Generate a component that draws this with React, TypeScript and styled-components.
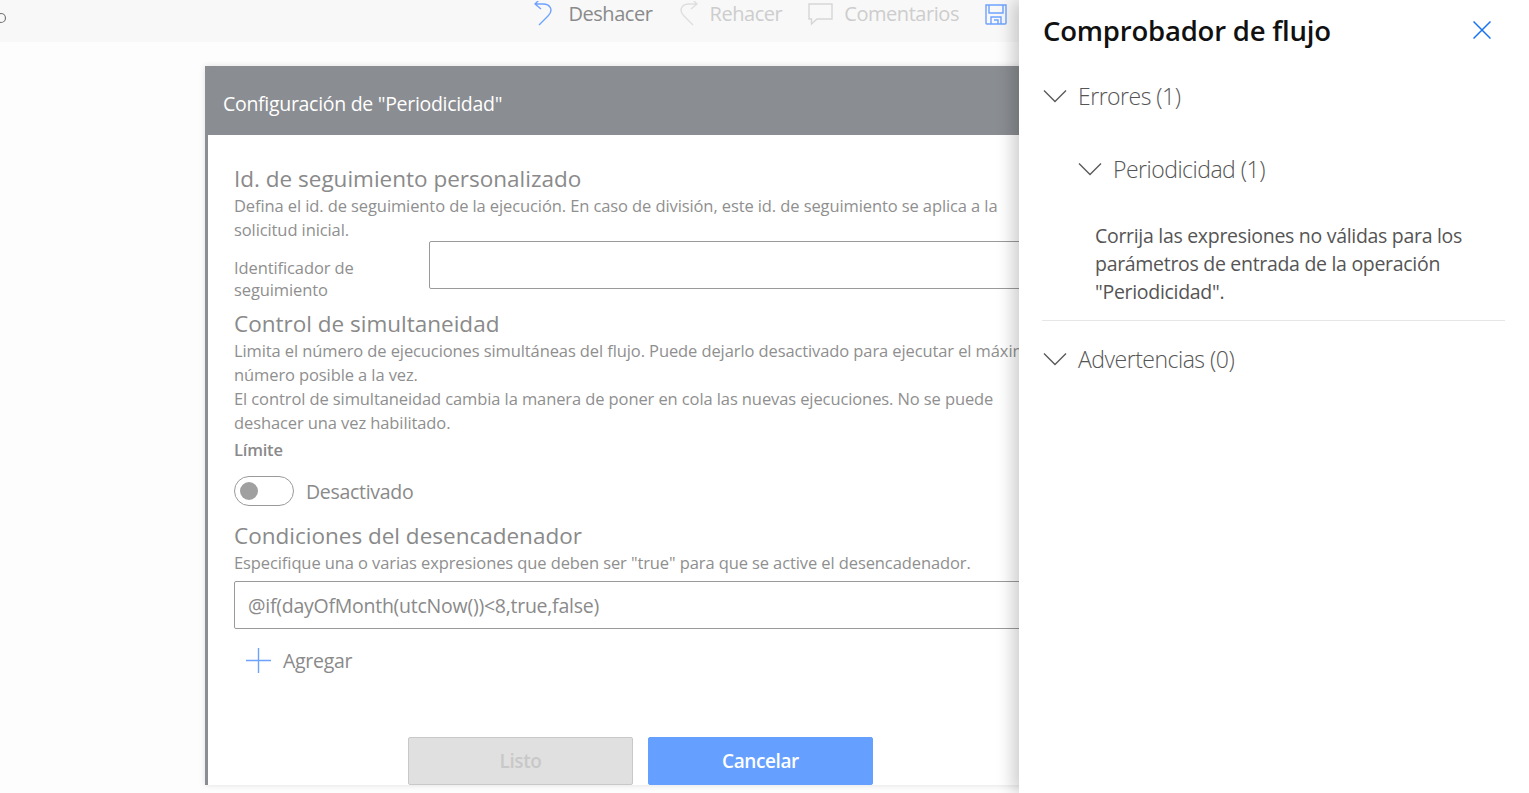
import React from "react";
import styled, { createGlobalStyle } from "styled-components";

const Global = createGlobalStyle`
  html, body { margin: 0; padding: 0; height: 100%; overflow: hidden; background: #fff; }
  #root { height: 100%; }
  * { box-sizing: border-box; }
`;

const font = `"Open Sans", "Noto Sans", "Liberation Sans", sans-serif`;

const Page = styled.div`
  display: flex;
  width: 1529px;
  height: 793px;
  overflow: hidden;
  font-family: ${font};
`;
const Main = styled.main`
  flex: 1;
  min-width: 0;
  overflow: hidden;
  background: #fdfdfd;
`;
const Toolbar = styled.div`
  display: flex;
  align-items: center;
  height: 42px;
  padding: 0 12px 14px 0;
  background: #f8f8f8;
  justify-content: space-between;
`;
const ToolGroup = styled.div`
  display: flex;
  align-items: center;
`;
const ToolLabel = styled.span<{ $off?: boolean }>`
  font-size: 20px;
  letter-spacing: -0.45px;
  line-height: 28px;
  margin-left: ${(p) => (p.$off ? 11 : 14)}px;
  margin-right: 26px;
  color: ${(p) => (p.$off ? "#cdcdcd" : "#8a8a8a")};
  white-space: nowrap;
`;
const Stage = styled.div`
  padding: 24px 0 0 205px;
`;
const Dialog = styled.section`
  width: 980px;
  background: #fff;
  border-left: 3px solid #8a8d91;
  box-shadow: 0 0 6px rgba(0, 0, 0, 0.12);
`;
const DialogHeader = styled.header`
  height: 69px;
  margin-left: -3px;
  padding: 24px 0 0 18px;
  background: #8a8d91;
  color: #fff;
  font-size: 19.5px;
  letter-spacing: -0.3px;
  line-height: 28px;
`;
const DialogBody = styled.div`
  padding: 29px 0 0 26px;
`;
const Heading = styled.h2`
  margin: 0;
  font-size: 22.5px;
  font-weight: 400;
  line-height: 30px;
  color: #8a8a8a;
  letter-spacing: 0;
  white-space: nowrap;
`;
const SpacedHeading = styled(Heading)`
  margin-top: 15px;
`;
const Description = styled.p`
  margin: 0;
  font-size: 16.5px;
  line-height: 24px;
  color: #8f8f8f;
  white-space: nowrap;
  letter-spacing: -0.1px;
`;
const FieldRow = styled.div`
  display: flex;
  height: 60px;
  margin-top: -1px;
  margin-bottom: 8px;
`;
const FieldLabel = styled.label`
  width: 195px;
  padding-top: 16px;
  font-size: 16.5px;
  letter-spacing: -0.1px;
  line-height: 22px;
  color: #8f8f8f;
`;
const TextBox = styled.div<{ $wide?: boolean }>`
  width: ${(p) => (p.$wide ? 900 : 700)}px;
  height: 48px;
  padding-left: 13px;
  border: 1px solid #9a9a9a;
  border-radius: 2px;
  background: #fff;
  font-size: 19.5px;
  letter-spacing: -0.25px;
  line-height: 48px;
  color: #8a8a8a;
`;
const LimitLabel = styled.div`
  margin-top: 4px;
  font-size: 16.5px;
  font-weight: 600;
  letter-spacing: -0.2px;
  line-height: 22px;
  color: #8a8a8a;
`;
const ToggleRow = styled.div`
  display: flex;
  align-items: center;
  height: 30px;
  margin-top: 15px;
`;
const Toggle = styled.div`
  display: flex;
  align-items: center;
  width: 60px;
  height: 30px;
  padding-left: 5px;
  border: 1px solid #9a9a9a;
  border-radius: 15px;
`;
const Knob = styled.span`
  width: 18px;
  height: 18px;
  border-radius: 50%;
  background: #a0a0a0;
`;
const ToggleText = styled.span`
  margin-left: 12px;
  font-size: 19.5px;
  letter-spacing: -0.3px;
  color: #8a8a8a;
`;
const ConditionBox = styled.div`
  margin-top: 6px;
`;
const AddRow = styled.div`
  display: flex;
  align-items: center;
  height: 30px;
  margin-top: 16px;
  padding-left: 12px;
`;
const AddText = styled.span`
  margin-left: 12px;
  font-size: 19.5px;
  letter-spacing: -0.3px;
  color: #8a8a8a;
`;
const Actions = styled.div`
  display: flex;
  gap: 15px;
  margin-top: 62px;
  padding-left: 174px;
`;
const ActionButton = styled.button<{ $primary?: boolean }>`
  width: 225px;
  height: 48px;
  padding: 0;
  border: 1px solid ${(p) => (p.$primary ? "#659fff" : "#c8c8c8")};
  border-radius: 2px;
  background: ${(p) => (p.$primary ? "#659fff" : "#e0e0e0")};
  color: ${(p) => (p.$primary ? "#fff" : "#c8c8c8")};
  font-family: ${font};
  font-size: 19px;
  font-weight: 600;
  letter-spacing: -0.4px;
`;
const Panel = styled.aside`
  position: relative;
  z-index: 1;
  flex: none;
  width: 510px;
  height: 793px;
  padding: 0 24px 0 24px;
  background: #fff;
  box-shadow: -6px 0 16px rgba(0, 0, 0, 0.2);
`;
const PanelHead = styled.div`
  display: flex;
  align-items: center;
  justify-content: space-between;
  height: 60px;
  padding-right: 14px;
`;
const PanelTitle = styled.h1`
  margin: 0;
  font-size: 27.5px;
  font-weight: 600;
  letter-spacing: -0.2px;
  color: #111;
`;
const SectionRow = styled.div<{ $indent?: boolean; $top: number }>`
  display: flex;
  align-items: center;
  height: 40px;
  margin-top: ${(p) => p.$top}px;
  padding-left: ${(p) => (p.$indent ? 35 : 0)}px;
`;
const SectionText = styled.span`
  margin-left: 11px;
  font-size: 23px;
  font-weight: 300;
  letter-spacing: -0.5px;
  color: #555;
`;
const Message = styled.p`
  width: 440px;
  margin: 33px 0 0;
  padding-left: 52px;
  box-sizing: content-box;
  margin-left: 0;
  font-size: 19.5px;
  letter-spacing: -0.3px;
  line-height: 28px;
  color: #555;
`;
const Divider = styled.hr`
  height: 1px;
  margin: 14px 0 0 -1px;
  border: 0;
  background: #e6e6e6;
`;

const Chevron = () => (
  <svg width="24" height="14" viewBox="0 0 24 14" fill="none" stroke="#5a5a5a" strokeWidth="1.4">
    <path d="M1 1.5 L12 12.5 L23 1.5" />
  </svg>
);

export default function App() {
  return (
    <Page>
      <Global />
      <Main>
        <Toolbar>
          <svg width="7" height="20" viewBox="0 0 7 20" fill="none" stroke="#777" strokeWidth="1.2">
            <circle cx="1" cy="14" r="4.5" />
          </svg>
          <ToolGroup>
            <svg width="20" height="26" viewBox="0 0 20 26" fill="none" stroke="#6ea2ff" strokeWidth="1.4" style={{ marginTop: 0 }}>
              <path d="M5 24 L14 15 C20 9 16 3 9 3 L1 3 M6 -2 L1 3 L7 8" />
            </svg>
            <ToolLabel>Deshacer</ToolLabel>
            <svg width="20" height="26" viewBox="0 0 20 26" fill="none" stroke="#dedede" strokeWidth="1.4">
              <path d="M15 24 L6 15 C0 9 4 3 11 3 L19 3 M14 -2 L19 3 L13 8" />
            </svg>
            <ToolLabel $off>Rehacer</ToolLabel>
            <svg width="25" height="24" viewBox="0 0 25 24" fill="none" stroke="#d6d6d6" strokeWidth="1.4">
              <path d="M1 2 H24 V17 H9 L3.5 22 V17 H1 Z" />
            </svg>
            <ToolLabel $off>Comentarios</ToolLabel>
            <svg width="22" height="22" viewBox="0 0 22 22" fill="none" stroke="#6ea2ff" strokeWidth="1.4">
              <path d="M1 2 H21 V20 Q21 21 20 21 H2 Q1 21 1 20 Z M4 2 V10 H18 V2 M6 21 V14 H16 V21 M9 17 H13 V21" />
            </svg>
          </ToolGroup>
        </Toolbar>
        <Stage>
          <Dialog>
            <DialogHeader>Configuración de "Periodicidad"</DialogHeader>
            <DialogBody>
              <Heading>Id. de seguimiento personalizado</Heading>
              <Description>
                Defina el id. de seguimiento de la ejecución. En caso de división, este id. de seguimiento se aplica a la
                <br />
                solicitud inicial.
              </Description>
              <FieldRow>
                <FieldLabel>Identificador de seguimiento</FieldLabel>
                <TextBox />
              </FieldRow>
              <Heading>Control de simultaneidad</Heading>
              <Description>
                Limita el número de ejecuciones simultáneas del flujo. Puede dejarlo desactivado para ejecutar el máximo
                <br />
                número posible a la vez.
                <br />
                El control de simultaneidad cambia la manera de poner en cola las nuevas ejecuciones. No se puede
                <br />
                deshacer una vez habilitado.
              </Description>
              <LimitLabel>Límite</LimitLabel>
              <ToggleRow>
                <Toggle>
                  <Knob />
                </Toggle>
                <ToggleText>Desactivado</ToggleText>
              </ToggleRow>
              <SpacedHeading>Condiciones del desencadenador</SpacedHeading>
              <Description>Especifique una o varias expresiones que deben ser "true" para que se active el desencadenador.</Description>
              <ConditionBox>
                <TextBox $wide>@if(dayOfMonth(utcNow())&lt;8,true,false)</TextBox>
              </ConditionBox>
              <AddRow>
                <svg width="25" height="25" viewBox="0 0 25 25" stroke="#6ea2ff" strokeWidth="1.4">
                  <path d="M0 12.5 H25 M12.5 0 V25" />
                </svg>
                <AddText>Agregar</AddText>
              </AddRow>
              <Actions>
                <ActionButton disabled>Listo</ActionButton>
                <ActionButton $primary>Cancelar</ActionButton>
              </Actions>
            </DialogBody>
          </Dialog>
        </Stage>
      </Main>
      <Panel>
        <PanelHead>
          <PanelTitle>Comprobador de flujo</PanelTitle>
          <svg width="18" height="18" viewBox="0 0 18 18" stroke="#1a73f0" strokeWidth="1.5">
            <path d="M0.5 0.5 L17.5 17.5 M17.5 0.5 L0.5 17.5" />
          </svg>
        </PanelHead>
        <SectionRow $top={16}>
          <Chevron />
          <SectionText>Errores (1)</SectionText>
        </SectionRow>
        <SectionRow $indent $top={33}>
          <Chevron />
          <SectionText>Periodicidad (1)</SectionText>
        </SectionRow>
        <Message>
          Corrija las expresiones no válidas para los parámetros de entrada de la operación "Periodicidad".
        </Message>
        <Divider />
        <SectionRow $top={18}>
          <Chevron />
          <SectionText>Advertencias (0)</SectionText>
        </SectionRow>
      </Panel>
    </Page>
  );
}
